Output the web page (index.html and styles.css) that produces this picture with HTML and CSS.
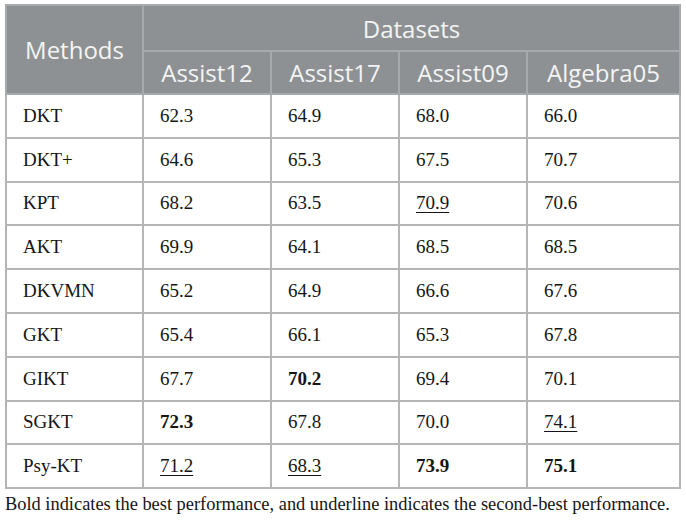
FILE: index.html
```html
<!DOCTYPE html>
<html lang="en">
<head>
    <meta charset="UTF-8">
    <title>Table</title>
    <link rel="stylesheet" href="styles.css">
</head>
<body>
    <div class="wrap">
        <table class="results">
            <colgroup>
                <col class="c-method">
                <col class="c-data">
                <col class="c-data">
                <col class="c-data">
                <col class="c-last">
            </colgroup>
            <thead>
                <tr class="top">
                    <th rowspan="2">Methods</th>
                    <th colspan="4">Datasets</th>
                </tr>
                <tr class="sub">
                    <th>Assist12</th>
                    <th>Assist17</th>
                    <th>Assist09</th>
                    <th>Algebra05</th>
                </tr>
            </thead>
            <tbody>
                <tr><td>DKT</td><td>62.3</td><td>64.9</td><td>68.0</td><td>66.0</td></tr>
                <tr><td>DKT+</td><td>64.6</td><td>65.3</td><td>67.5</td><td>70.7</td></tr>
                <tr><td>KPT</td><td>68.2</td><td>63.5</td><td><u>70.9</u></td><td>70.6</td></tr>
                <tr><td>AKT</td><td>69.9</td><td>64.1</td><td>68.5</td><td>68.5</td></tr>
                <tr><td>DKVMN</td><td>65.2</td><td>64.9</td><td>66.6</td><td>67.6</td></tr>
                <tr><td>GKT</td><td>65.4</td><td>66.1</td><td>65.3</td><td>67.8</td></tr>
                <tr><td>GIKT</td><td>67.7</td><td><b>70.2</b></td><td>69.4</td><td>70.1</td></tr>
                <tr><td>SGKT</td><td><b>72.3</b></td><td>67.8</td><td>70.0</td><td><u>74.1</u></td></tr>
                <tr><td>Psy-KT</td><td><u>71.2</u></td><td><u>68.3</u></td><td><b>73.9</b></td><td><b>75.1</b></td></tr>
            </tbody>
        </table>
        <p class="note">Bold indicates the best performance, and underline indicates the second-best performance.</p>
    </div>
</body>
</html>
```

FILE: styles.css
```css
*{
    margin: 0;
    padding: 0;
    box-sizing: border-box;
}

body{
    background: #fff;
    color: #111;
}

.wrap{
    padding: 4px 6px 0 5px;
}

.results{
    width: 674px;
    border-collapse: collapse;
    table-layout: fixed;
}

.c-method{ width: 137px; }
.c-data{ width: 128px; }
.c-last{ width: 153px; }

.results th{
    background: #8d9193;
    color: #f4f4f4;
    font-family: "Open Sans", sans-serif;
    font-weight: 400;
    font-size: 24px;
    text-align: center;
    border: 2px solid #a7aaac;
}

.results .top th{
    height: 46px;
}

.results .sub th{
    height: 43px;
}

.results td{
    height: 43.8px;
    border: 2px solid #b5b5b5;
    font-family: "Liberation Serif", serif;
    font-size: 19px;
    padding-left: 16px;
    color: #151515;
}

.results u{
    text-underline-offset: 3px;
    text-decoration-thickness: 1px;
}

.note{
    font-family: "Liberation Serif", serif;
    font-size: 18.4px;
    color: #151515;
    margin-top: 5px;
}
```
